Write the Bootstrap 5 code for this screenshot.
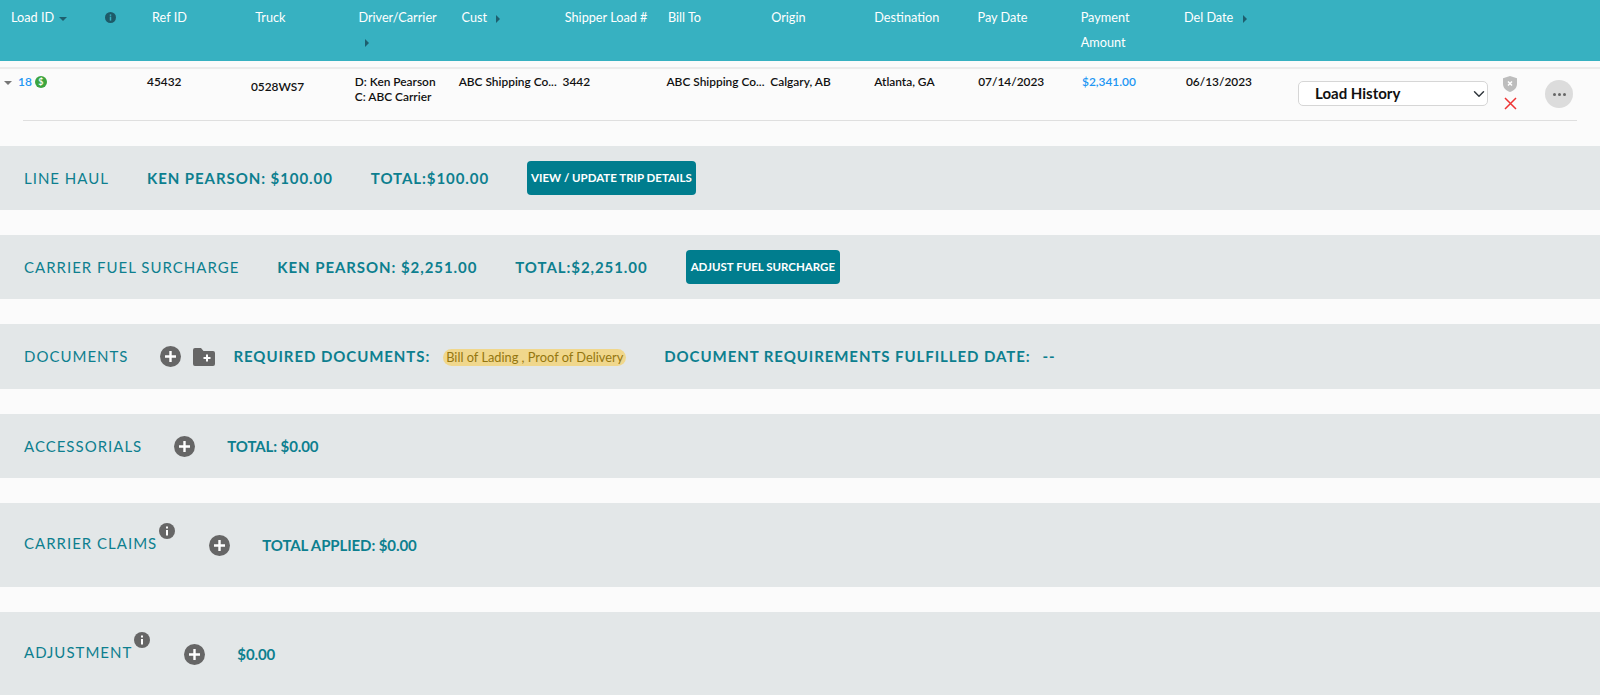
<!DOCTYPE html>
<html lang="en">
<head>
<meta charset="utf-8">
<title>Load details</title>
<link href="https://cdn.jsdelivr.net/npm/bootstrap@5.3.0/dist/css/bootstrap.min.css" rel="stylesheet">
<style>
html,body{height:695px;overflow:hidden}
body{background:#fbfbfb;font-family:Lato,"Liberation Sans",sans-serif;color:#111}
.head-grid{display:grid;grid-template-columns:93px 48px repeat(11,103.2px) 1fr;background:#37b1c1;color:#fff;height:61px;padding-left:10px;font-size:12.7px;line-height:25px;padding-top:5px;white-space:nowrap}
.load-grid{display:grid;grid-template-columns:143px repeat(10,103.9px) 1fr;padding-left:4px;font-size:11.9px;font-weight:600;line-height:15px;padding-top:5px;height:51px;white-space:nowrap}
.head-grid>div{padding-left:1px}
.sort-mark{display:inline-block;vertical-align:middle;margin-left:6px;border-style:solid;border-color:transparent}
.mark-right{border-width:4px 0 4px 4px;border-left-color:#1e5f6e}
.mark-down{border-width:4px 4px 0 4px;border-top-color:#1e5f6e;margin-left:2px}
.wrap-mark{display:block;margin:9px 0 0 7px}
.head-info{width:11px;height:11px;display:block;margin:7px 0 0 1px}
.head-spacer{height:8px;border-bottom:2px solid #ececec}
.load-row{position:relative}
.load-line{height:1px;background:#dfdfdf;margin:0 23px;width:1554px}
.load-link{color:#2196f3}
.cell-tri{display:inline-block;border-style:solid;border-width:4px 4px 0 4px;border-color:#777 transparent transparent;vertical-align:middle;margin-right:6px}
.dollar-badge{display:inline-flex;width:12px;height:12px;border-radius:50%;background:#3ba53f;color:#fff;font-size:9px;align-items:center;justify-content:center;vertical-align:1px;margin-left:3px}
.cell-tr{padding-top:5px}
.row-tools{position:absolute;left:1298px;top:12px;display:flex;align-items:flex-start}
.hist-select{width:190px;height:25px;font-size:15px;font-weight:700;color:#111;padding:0 20px 0 16px;border:1px solid #d6d6d6;border-radius:5px;background-position:right 0 center;line-height:23px;font-family:Lato,"Liberation Sans",sans-serif}
.tool-col{width:14px;margin-left:15px;margin-top:-5px;display:flex;flex-direction:column;align-items:center;gap:5px}
.more-btn{width:28px;height:28px;border-radius:50%;background:#dcdcdc;margin-left:28px;margin-top:-1px;display:flex;align-items:center;justify-content:center;gap:2px}
.more-btn i{width:3px;height:3px;border-radius:50%;background:#666;display:block}
.band{background:#e3e7e8;padding-left:24px;display:flex;align-items:center;color:#0d7f8f;white-space:nowrap;margin-top:25px}
.band-a{height:64px;gap:38px}
.band-b{height:65px;gap:32px}
.band-acc{height:64px}
.band-c{height:84px;gap:32px}
.band-label{font-size:15px;letter-spacing:1px;text-transform:uppercase;position:relative}
.band-val{font-size:15px;font-weight:700;letter-spacing:.93px;text-transform:uppercase}
.band-tight{letter-spacing:-.1px}
.band-btn{background:#007d8e;color:#fff;font-size:11.5px;font-weight:700;border:0;border-radius:4px;height:34px;padding:0 4px;text-transform:uppercase;white-space:nowrap}
.band-btn:hover{background:#007d8e;color:#fff}
.band-btn-wide{padding:0 5px}
.round-ic{width:21px;height:21px;display:block;flex:none}
.label-has-info{margin-right:20px;padding-bottom:3px}
.label-info{position:absolute;left:100%;top:-9px;width:16px;height:16px;margin-left:2px}
.doc-pill{background:#f0d78c;color:#94760f;font-size:12.8px;border-radius:9px;padding:0 3px;line-height:17px;display:inline-block;margin:2px 38px 0 13px}
.folder-ic{margin:0 18px 0 12px}
.doc-dash{margin-left:12px}
</style>
</head>
<body>
<div class="head-grid">
  <div>Load ID <span class="sort-mark mark-down"></span></div>
  <div><svg class="head-info" viewBox="0 0 12 12"><circle cx="6" cy="6" r="6" fill="#1d5a68"/><rect x="5.2" y="5" width="1.6" height="4.4" fill="#37b1c1"/><rect x="5.2" y="2.6" width="1.6" height="1.6" fill="#37b1c1"/></svg></div>
  <div>Ref ID</div>
  <div>Truck</div>
  <div>Driver/Carrier<span class="sort-mark mark-right wrap-mark"></span></div>
  <div>Cust <span class="sort-mark mark-right"></span></div>
  <div>Shipper Load #</div>
  <div>Bill To</div>
  <div>Origin</div>
  <div>Destination</div>
  <div>Pay Date</div>
  <div>Payment<br>Amount</div>
  <div>Del Date <span class="sort-mark mark-right"></span></div>
</div>
<div class="head-spacer"></div>
<div class="load-row">
  <div class="load-grid">
    <div><span class="cell-tri"></span><span class="load-link">18</span><span class="dollar-badge">$</span></div>
    <div>45432</div>
    <div class="cell-tr">0528WS7</div>
    <div>D: Ken Pearson<br>C: ABC Carrier</div>
    <div>ABC Shipping Co...</div>
    <div>3442</div>
    <div>ABC Shipping Co...</div>
    <div>Calgary, AB</div>
    <div>Atlanta, GA</div>
    <div>07/14/2023</div>
    <div class="load-link">$2,341.00</div>
    <div>06/13/2023</div>
  </div>
  <div class="load-line"></div>
  <div class="row-tools">
    <select class="form-select hist-select" aria-label="Load History"><option>Load History</option></select>
    <div class="tool-col">
      <svg width="14" height="16" viewBox="0 0 14 16"><path d="M7 0l7 2.2v5.6C14 12 10.800 14.800 7 16 3.200 14.800 0 12 0 7.800V2.200z" fill="#bdbdbd"/><path d="M5 5.500l4 4M9 5.500l-4 4" stroke="#fff" stroke-width="1.500"/></svg>
      <svg width="13" height="13" viewBox="0 0 13 13"><path d="M1 1l11 11M12 1L1 12" stroke="#ee3333" stroke-width="1.500"/></svg>
    </div>
    <div class="more-btn"><i></i><i></i><i></i></div>
  </div>
</div>

<div class="band band-a">
  <span class="band-label">Line Haul</span>
  <span class="band-val">Ken Pearson: $100.00</span>
  <span class="band-val">Total:$100.00</span>
  <button class="btn band-btn" type="button">View / Update Trip Details</button>
</div>
<div class="band band-a">
  <span class="band-label">Carrier Fuel Surcharge</span>
  <span class="band-val">Ken Pearson: $2,251.00</span>
  <span class="band-val">Total:$2,251.00</span>
  <button class="btn band-btn band-btn-wide" type="button">Adjust Fuel Surcharge</button>
</div>
<div class="band band-b">
  <span class="band-label">Documents</span>
  <div class="d-flex align-items-center">
    <svg class="round-ic" viewBox="0 0 21 21"><circle cx="10.500" cy="10.500" r="10.500" fill="#666"/><path d="M10.500 5v11M5 10.500h11" stroke="#fff" stroke-width="2.400"/></svg>
    <svg class="folder-ic" width="22" height="18" viewBox="0 0 22 18"><path d="M0 2a2 2 0 0 1 2-2h6l2.500 3H20a2 2 0 0 1 2 2v11a2 2 0 0 1-2 2H2a2 2 0 0 1-2-2z" fill="#666"/><path d="M14 6.500v7M10.500 10h7" stroke="#fff" stroke-width="2"/></svg>
    <span class="band-val">Required Documents:</span>
    <span class="doc-pill">Bill of Lading , Proof of Delivery</span>
    <span class="band-val">Document Requirements Fulfilled Date:</span>
    <span class="band-val doc-dash">--</span>
  </div>
</div>
<div class="band band-b band-acc">
  <span class="band-label">Accessorials</span>
  <svg class="round-ic" viewBox="0 0 21 21"><circle cx="10.500" cy="10.500" r="10.500" fill="#666"/><path d="M10.500 5v11M5 10.500h11" stroke="#fff" stroke-width="2.400"/></svg>
  <span class="band-val band-tight">Total: $0.00</span>
</div>
<div class="band band-c">
  <span class="band-label label-has-info">Carrier Claims<svg class="label-info" viewBox="0 0 16 16"><circle cx="8" cy="8" r="8" fill="#666"/><rect x="7" y="7" width="2" height="5.500" fill="#fff"/><rect x="7" y="3.500" width="2" height="2" fill="#fff"/></svg></span>
  <svg class="round-ic" viewBox="0 0 21 21"><circle cx="10.500" cy="10.500" r="10.500" fill="#666"/><path d="M10.500 5v11M5 10.500h11" stroke="#fff" stroke-width="2.400"/></svg>
  <span class="band-val band-tight">Total Applied: $0.00</span>
</div>
<div class="band band-c">
  <span class="band-label label-has-info">Adjustment<svg class="label-info" viewBox="0 0 16 16"><circle cx="8" cy="8" r="8" fill="#666"/><rect x="7" y="7" width="2" height="5.500" fill="#fff"/><rect x="7" y="3.500" width="2" height="2" fill="#fff"/></svg></span>
  <svg class="round-ic" viewBox="0 0 21 21"><circle cx="10.500" cy="10.500" r="10.500" fill="#666"/><path d="M10.500 5v11M5 10.500h11" stroke="#fff" stroke-width="2.400"/></svg>
  <span class="band-val band-tight">$0.00</span>
</div>
<script src="https://cdn.jsdelivr.net/npm/bootstrap@5.3.0/dist/js/bootstrap.bundle.min.js"></script>
</body>
</html>
